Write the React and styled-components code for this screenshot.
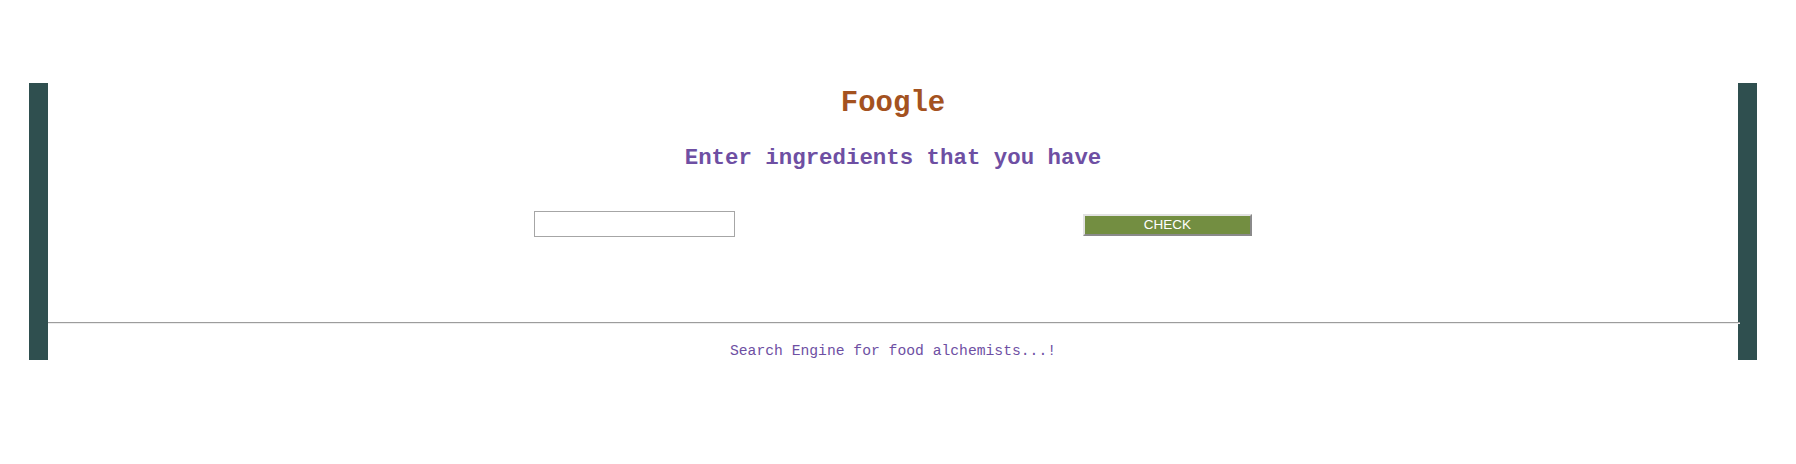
import React from 'react';
import styled, { createGlobalStyle } from 'styled-components';

const GlobalStyle = createGlobalStyle`
  html, body {
    margin: 0;
    padding: 0;
    background: #ffffff;
  }
  body {
    padding: 83px 39px 0 29px;
    font-family: "Liberation Mono", "DejaVu Sans Mono", monospace;
  }
`;

const Frame = styled.div`
  box-sizing: border-box;
  width: 1728px;
  border-left: 19px solid #2f4f4f;
  border-right: 19px solid #2f4f4f;
  padding: 4px 0 0;
  display: flex;
  flex-direction: column;
  align-items: center;
`;

const Title = styled.h1`
  margin: 0;
  font-size: 29px;
  font-weight: 700;
  color: #a4521f;
  line-height: 33px;
`;

const Subtitle = styled.h2`
  margin: 26px 0 0;
  font-size: 22.4px;
  font-weight: 700;
  color: #6e4fa3;
  line-height: 25px;
`;

const SearchRow = styled.form`
  margin-top: 40px;
  width: 718px;
  display: flex;
  align-items: center;
  justify-content: space-between;
`;

const Field = styled.input`
  box-sizing: border-box;
  width: 201px;
  height: 26px;
  margin: 0;
  padding: 2px 4px;
  border: 1px solid #a6a6a6;
  background: #ffffff;
  outline: none;
  font-family: "Liberation Sans", Arial, sans-serif;
  font-size: 13px;
`;

const CheckButton = styled.button`
  box-sizing: border-box;
  width: 169px;
  height: 22px;
  margin: 1px 0 0;
  padding: 0;
  background: #738e41;
  color: #ffffff;
  border: 2px solid;
  border-color: #e2e2e2 #8a8a8a #8a8a8a #e2e2e2;
  font-family: "Liberation Sans", Arial, sans-serif;
  font-size: 13.5px;
  line-height: 18px;
  cursor: pointer;
`;

const Rule = styled.hr`
  box-sizing: border-box;
  align-self: stretch;
  margin: 85px -2px 0 0;
  height: 2px;
  border: 0;
  border-top: 1px solid #9c9c9c;
  border-bottom: 1px solid #ececec;
`;

const Tagline = styled.p`
  margin: 19px 0 0;
  font-size: 14.7px;
  line-height: 17px;
  color: #6e4fa3;
`;

export default function App() {
  return (
    <>
      <GlobalStyle />
      <Frame>
        <Title>Foogle</Title>
        <Subtitle>Enter ingredients that you have</Subtitle>
        <SearchRow onSubmit={e => e.preventDefault()}>
          <Field type="text" />
          <CheckButton type="submit">CHECK</CheckButton>
        </SearchRow>
        <Rule />
        <Tagline>Search Engine for food alchemists...!</Tagline>
      </Frame>
    </>
  );
}
